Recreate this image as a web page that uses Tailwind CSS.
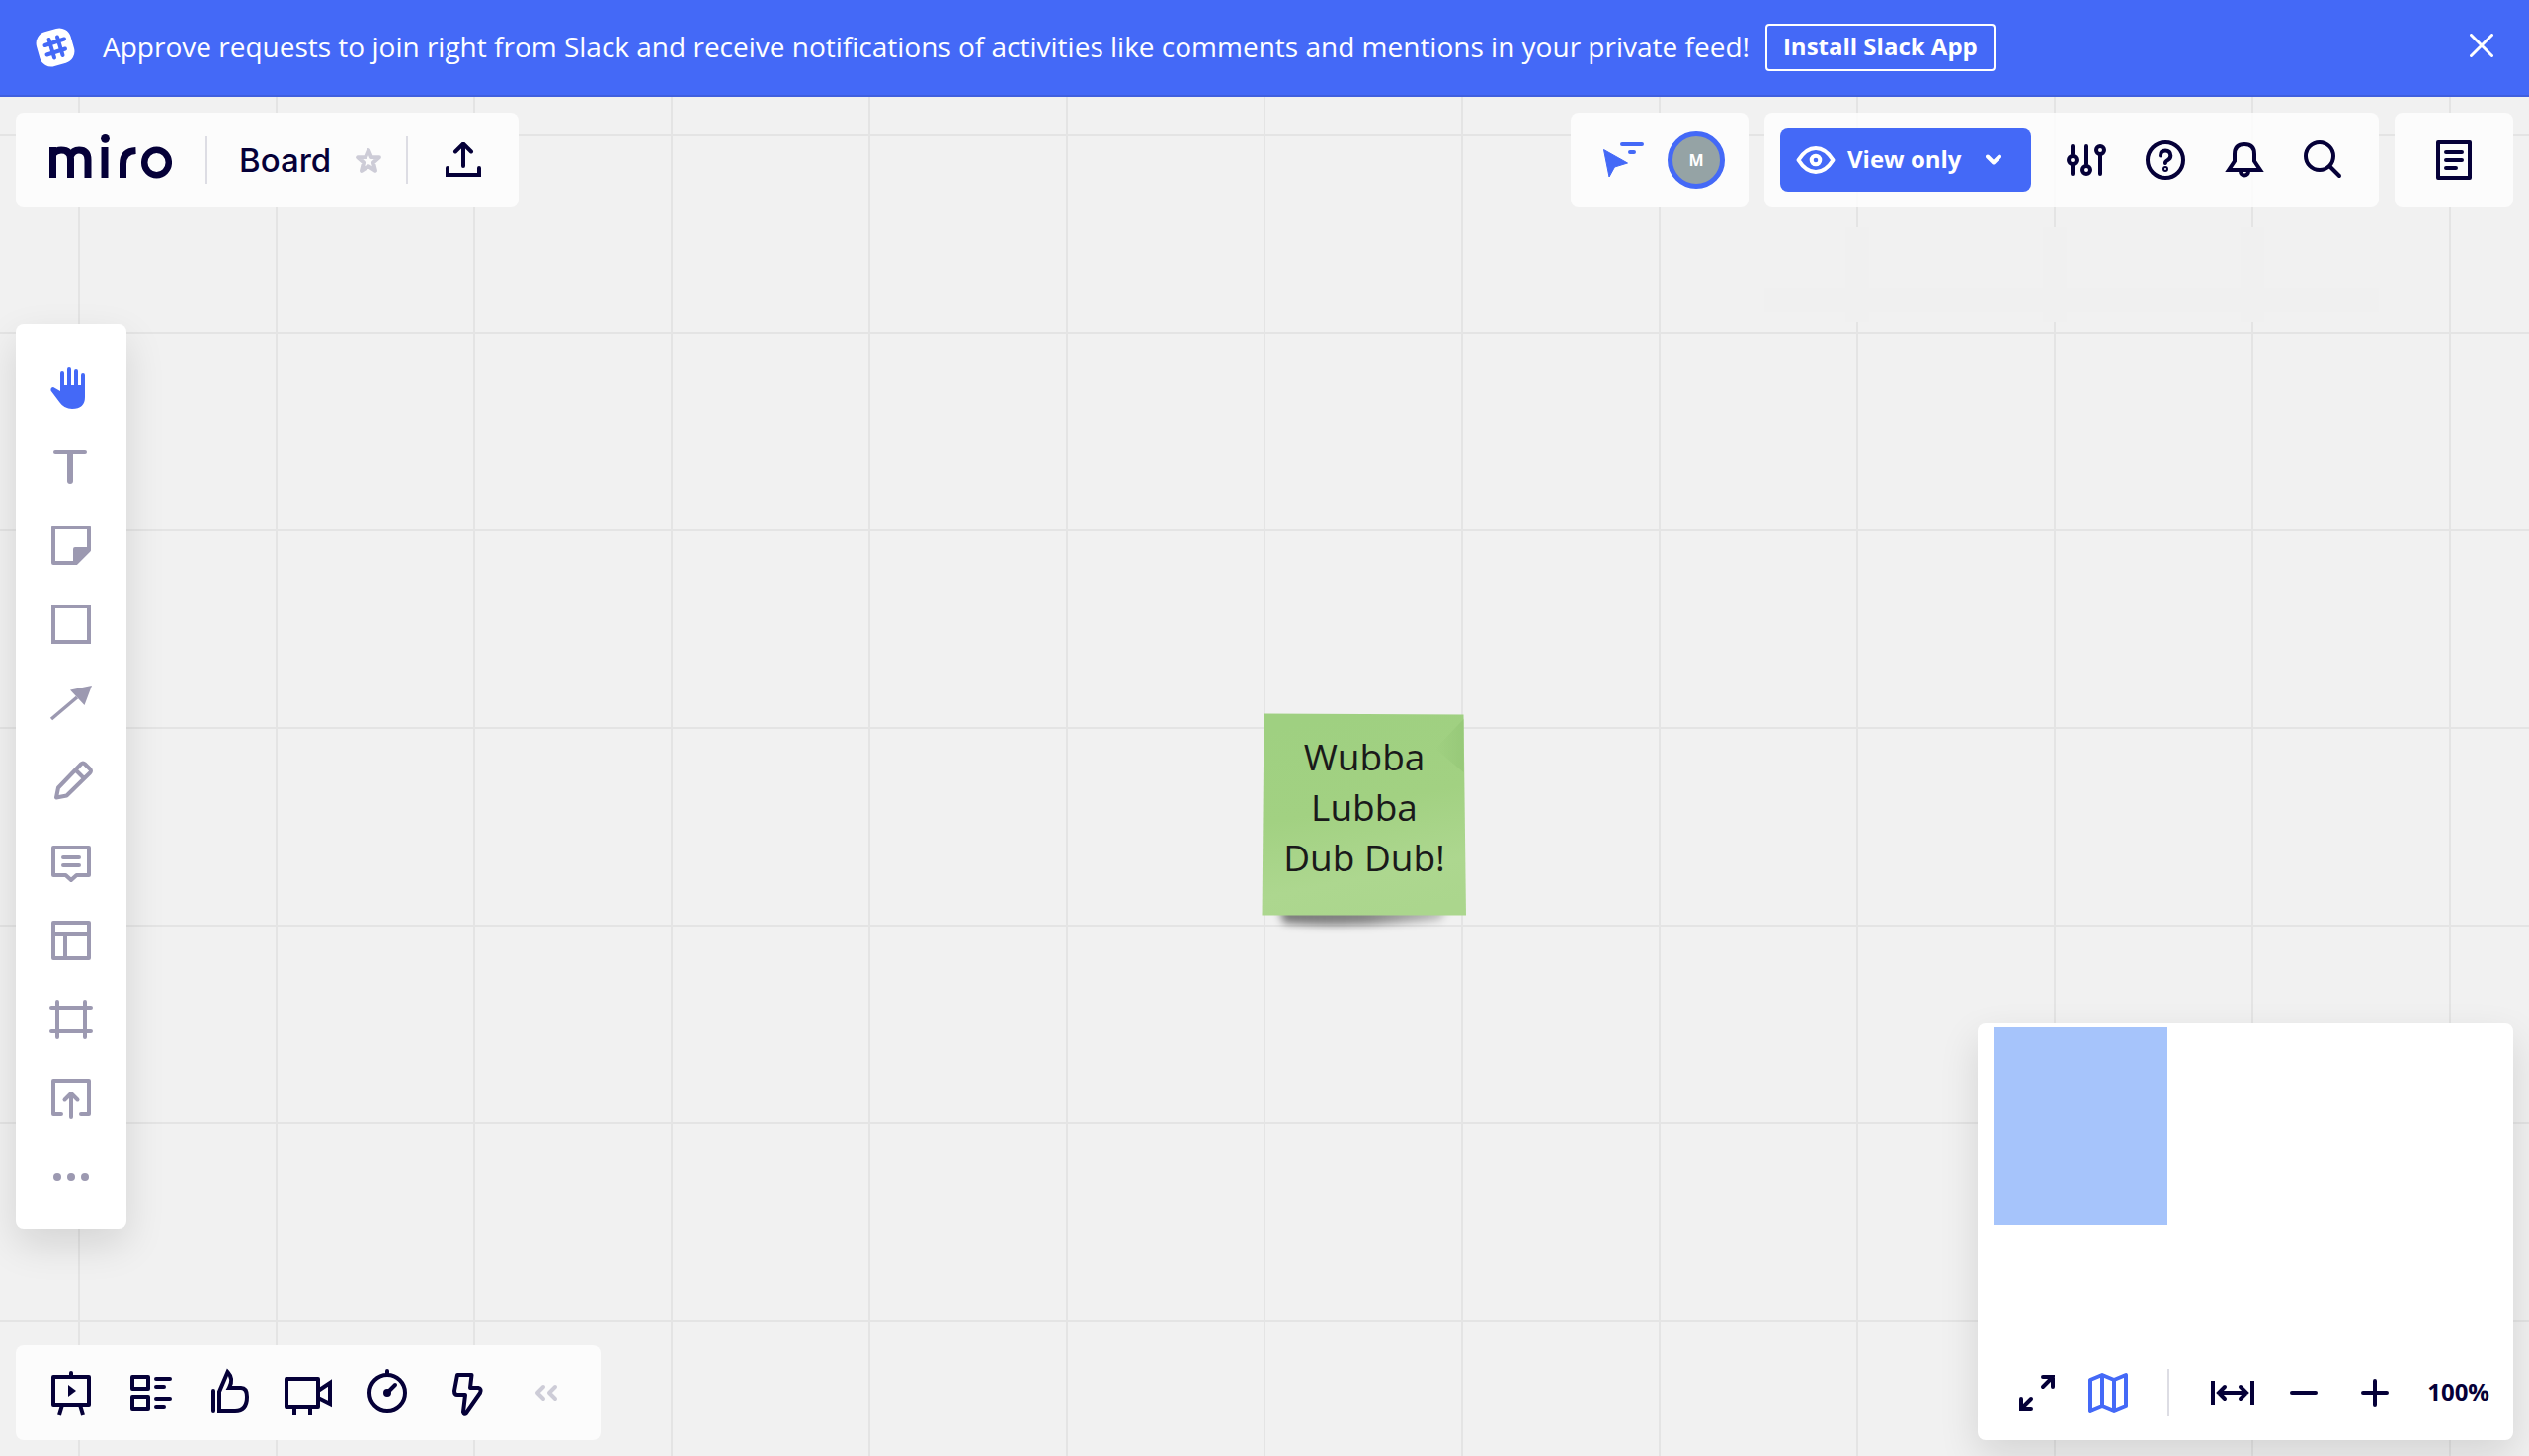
<!DOCTYPE html>
<html lang="en">
<head>
<meta charset="utf-8">
<title>Board</title>
<script src="https://cdn.jsdelivr.net/npm/@tailwindcss/browser@4"></script>
</head>
<body class="flex h-screen flex-col overflow-hidden bg-[#f1f1f1] font-['Open_Sans',sans-serif] text-[#050038]">

<header class="z-10 flex h-[98px] shrink-0 items-center border-b-2 border-[#405fde] bg-[#4469f7] pl-9 pr-8 text-white">
  <svg class="size-10 shrink-0" viewBox="0 0 40 40" fill="none" aria-hidden="true">
    <rect x="2" y="2" width="36" height="36" rx="12" fill="#fff" transform="rotate(-16 20 20)"/>
    <path d="M13.500 12l5.500 18.500M22 9.500L27.500 28M9.500 18L29 11.500M11.500 27.500L30 21.500" stroke="#4469f7" stroke-width="4" stroke-linecap="round"/>
  </svg>
  <p class="ml-7 pb-0.5 whitespace-nowrap text-[28px] leading-9">Approve requests to join right from Slack and receive notifications of activities like comments and mentions in your private feed!</p>
  <button class="ml-4 flex h-12 shrink-0 items-center rounded-sm border-2 border-white px-4 pb-0.5 text-[24px] leading-8 font-bold whitespace-nowrap">Install Slack App</button>
  <button class="ml-auto flex size-8 items-center justify-center pb-1" aria-label="Close">
    <svg class="size-6" viewBox="0 0 24 24" stroke="#fff" stroke-width="3" stroke-linecap="round"><path d="M1.500 1.500l21 21M22.500 1.500l-21 21"/></svg>
  </button>
</header>

<main class="relative flex grow flex-col overflow-hidden bg-[linear-gradient(to_right,#e4e4e4_2px,transparent_2px),linear-gradient(to_bottom,#e4e4e4_2px,transparent_2px)] bg-size-[200px_200px] bg-position-[79px_38px] p-4">

  <div class="absolute top-[132px] right-[152px] h-24 w-[622px] bg-[#f1f1f1] bg-[linear-gradient(to_right,transparent_82px,#f0f0f0_82px,#f0f0f0_106px,transparent_106px)] bg-size-[200px_100%] pt-[62px]">
    <div class="h-6 bg-[#f0f0f0]"></div>
  </div>

  <div class="flex h-24 items-stretch">
    <nav class="flex items-center rounded-lg bg-[#fcfcfc] pr-[38px] pl-[34px]">
      <a href="#" class="text-[#050038]" aria-label="miro">
        <svg class="h-14 w-[124px]" viewBox="0 -4 124 56" fill="none" stroke="#050038">
          <path d="M3.500 11V42M3.500 18Q7 14 12 14Q21.500 14 21.500 23V42M21.500 20Q24 14 30 14Q39 14 39 24V42M56 11V42M74.500 42V28Q74.500 15 87.500 14.500" stroke-width="7"/>
          <circle cx="56.500" cy="2.300" r="4.400" fill="#050038" stroke="none"/>
          <ellipse cx="108.500" cy="26.500" rx="12.300" ry="12.800" stroke-width="6.500"/>
        </svg>
      </a>
      <span class="ml-[34px] h-12 w-0.5 bg-[#dddde4]"></span>
      <h1 class="ml-8 font-['Inter',sans-serif] text-[33px] leading-10 font-medium">Board</h1>
      <button class="ml-6" aria-label="Favourite">
        <svg class="size-7" viewBox="0 0 28 28" fill="none" stroke="#cdccd7" stroke-width="4" stroke-linejoin="round"><path d="M14 4l2.900 7 8 .300-6 5.200 2.100 8.300L14 20.300l-7 4.500 2.100-8.300-6-5.200 8-.300z"/></svg>
      </button>
      <span class="ml-6 h-12 w-0.5 bg-[#dddde4]"></span>
      <button class="ml-[38px]" aria-label="Export">
        <svg class="size-9" viewBox="0 0 36 36" fill="none" stroke="#050038" stroke-width="4" stroke-linecap="round"><path d="M18 24V2.500M10 9.500L18 1.500l8 8M2 26v7h32v-7"/></svg>
      </button>
    </nav>

    <div class="ml-auto flex items-center rounded-lg bg-[#fcfcfc] pr-6 pl-8">
      <button aria-label="Show cursors">
        <svg class="h-10 w-[42px]" viewBox="0 0 42 40" fill="#4469f7"><path d="M1.500 9.500l24 13.500-13 4-5.500 10z" stroke="#4469f7" stroke-linejoin="round"/><path d="M20 4h20M28 12h4" stroke="#4469f7" stroke-width="4" stroke-linecap="round"/></svg>
      </button>
      <button class="ml-6 flex size-[58px] items-center justify-center rounded-full border-[5px] border-[#4469f7] bg-[#95a3a5] text-base leading-6 font-bold text-white">M</button>
    </div>

    <div class="ml-4 flex items-center rounded-lg bg-[#fcfcfc] bg-[linear-gradient(to_right,transparent_93px,#fafafa_93px,#fafafa_95px,transparent_95px)] bg-size-[200px_100%] px-4">
      <button class="flex h-16 w-[254px] items-center rounded-lg bg-[#4469f7] pl-4 text-[24px] leading-8 font-bold whitespace-nowrap text-white">
        <svg class="h-7 w-10" viewBox="0 0 40 28" fill="none" stroke="#fff" stroke-width="4"><path d="M2.500 14Q10 2 20 2t17.500 12Q30 26 20 26T2.500 14z" stroke-linejoin="round"/><circle cx="20" cy="14" r="4.300"/></svg>
        <span class="ml-3 pb-0.5">View only</span>
        <svg class="ml-6 h-3 w-4" viewBox="0 0 16 12" fill="none" stroke="#fff" stroke-width="4" stroke-linecap="round" stroke-linejoin="round"><path d="M2 2.500l6 6 6-6"/></svg>
      </button>
      <div class="ml-8 flex gap-8 pr-4">
        <button aria-label="Settings">
          <svg class="size-12" viewBox="0 0 48 48" fill="none" stroke="#050038" stroke-width="4" stroke-linecap="round"><path d="M10 10v8M10 28v10M24 10v18M38 18v20"/><circle cx="10" cy="24" r="4"/><circle cx="24" cy="34" r="4"/><circle cx="38" cy="14" r="4"/></svg>
        </button>
        <button aria-label="Help">
          <svg class="size-12" viewBox="0 0 48 48" fill="none" stroke="#050038" stroke-width="4" stroke-linecap="round"><circle cx="24" cy="24" r="18"/><path d="M19 19.500Q19 14.500 24 14.500T29.300 19.500Q29.300 22.500 26.500 24T24 27"/><circle cx="24" cy="33" r="1"/></svg>
        </button>
        <button aria-label="Notifications">
          <svg class="size-12" viewBox="0 0 48 48" fill="none" stroke="#050038" stroke-width="4"><path d="M8 34L14 25V18Q14 8 24 8T34 18V25L40 34z"/><path d="M20 35.500a4 4 0 0 0 8 0"/></svg>
        </button>
        <button aria-label="Search">
          <svg class="size-12" viewBox="0 0 48 48" fill="none" stroke="#050038" stroke-width="4" stroke-linecap="round"><circle cx="20" cy="20" r="14"/><path d="M30.500 30.500L40 40"/></svg>
        </button>
      </div>
    </div>

    <div class="ml-4 flex w-[120px] items-center justify-center rounded-lg bg-[#fcfcfc]">
      <button aria-label="Notes">
        <svg class="size-12" viewBox="0 0 48 48" fill="none" stroke="#050038" stroke-width="4" stroke-linecap="round" stroke-linejoin="round"><path d="M8 6h32v36H8zM16 16h16M16 24h16M16 32h10"/></svg>
      </button>
    </div>
  </div>

  <div class="mt-[118px] flex w-28 flex-col rounded-lg bg-white pt-6 pb-3 shadow-[0_16px_40px_rgba(0,0,0,0.12)]">
    <button class="flex h-20 items-center justify-center" aria-label="Hand">
      <svg class="size-12" viewBox="0 0 48 48" fill="#4469f7"><path d="M15 26V10M22 26V6M29 26V8M36 26V12" stroke="#4469f7" stroke-width="4" stroke-linecap="round"/><path d="M13 22h25v12q0 12-13 12-8 0-12.500-6.500L3.500 27.500Q3 24 6 24l7 4z"/></svg>
    </button>
    <button class="flex h-20 items-center justify-center" aria-label="Text">
      <svg class="size-12" viewBox="0 0 48 48" stroke="#9c99b1" stroke-linecap="round"><path d="M8 10h30" stroke-width="4"/><path d="M23 12v27" stroke-width="6"/></svg>
    </button>
    <button class="flex h-20 items-center justify-center" aria-label="Sticky note">
      <svg class="size-12" viewBox="0 0 48 48" fill="none" stroke="#9c99b1" stroke-width="4" stroke-linejoin="round"><path d="M6 6h36v23L29 42H6z"/><path d="M28 42V28h14z" fill="#9c99b1"/></svg>
    </button>
    <button class="flex h-20 items-center justify-center" aria-label="Shape">
      <svg class="size-12" viewBox="0 0 48 48" fill="none" stroke="#9c99b1" stroke-width="4"><path d="M6 6h36v36H6z"/></svg>
    </button>
    <button class="flex h-20 items-center justify-center" aria-label="Arrow">
      <svg class="size-12" viewBox="0 0 48 48" fill="#9c99b1"><path d="M4 40L30 18" stroke="#9c99b1" stroke-width="3.500"/><path d="M45 6L23 10.500 37.500 26z"/></svg>
    </button>
    <button class="flex h-20 items-center justify-center" aria-label="Pen">
      <svg class="size-12" viewBox="0 0 48 48" fill="none" stroke="#9c99b1" stroke-width="4" stroke-linejoin="round"><path d="M9 39.500l2-10L34 5.500q2-2 4 0l5 5q2 2 0 4L19.500 37.500zM28.500 11.500l9 9"/></svg>
    </button>
    <button class="flex h-20 items-center justify-center" aria-label="Comment">
      <svg class="size-12" viewBox="0 0 48 48" fill="none" stroke="#9c99b1" stroke-width="4" stroke-linecap="round"><path d="M6 10h36v28H29.500L24 43 18.500 38H6z" stroke-linejoin="round"/><path d="M16 20h16M16 28h16"/></svg>
    </button>
    <button class="flex h-20 items-center justify-center" aria-label="Templates">
      <svg class="size-12" viewBox="0 0 48 48" fill="none" stroke="#9c99b1" stroke-width="4" stroke-linejoin="round"><path d="M6 6h36v36H6zM6 18h36M18 18v24"/></svg>
    </button>
    <button class="flex h-20 items-center justify-center" aria-label="Frame">
      <svg class="size-12" viewBox="0 0 48 48" fill="none" stroke="#9c99b1" stroke-width="4" stroke-linecap="round"><path d="M10 6v36M38 6v36M4 12h40M4 36h40"/></svg>
    </button>
    <button class="flex h-20 items-center justify-center" aria-label="Upload">
      <svg class="size-12" viewBox="0 0 48 48" fill="none" stroke="#9c99b1" stroke-width="4" stroke-linecap="round" stroke-linejoin="round"><path d="M14 40H6V6h36v34h-8M24 43V19M17.500 25.500L24 19l6.500 6.500"/></svg>
    </button>
    <button class="flex h-20 items-center justify-center" aria-label="More">
      <svg class="size-12" viewBox="0 0 48 48" fill="#9c99b1"><circle cx="10" cy="24" r="4"/><circle cx="24" cy="24" r="4"/><circle cx="38" cy="24" r="4"/></svg>
    </button>
  </div>

  <article class="absolute top-[624px] left-[1277px] h-[210px] w-[208px]">
    <svg class="absolute inset-0 size-full overflow-visible" viewBox="0 0 208 210" aria-hidden="true">
      <defs>
        <linearGradient id="paper" x1="0.400" y1="0" x2="0.600" y2="1"><stop offset="0" stop-color="#9fd081"/><stop offset=".45" stop-color="#a2d182"/><stop offset=".8" stop-color="#add78f"/><stop offset="1" stop-color="#abd68d"/></linearGradient>
        <linearGradient id="shade" x1="0" x2="1"><stop offset="0" stop-opacity=".5"/><stop offset=".5" stop-opacity=".45"/><stop offset="1" stop-opacity=".2"/></linearGradient>
        <linearGradient id="curl" x1="0" x2="1"><stop offset="0" stop-color="#95c777" stop-opacity="0"/><stop offset="1" stop-color="#95c777" stop-opacity=".8"/></linearGradient>
        <filter id="soft" x="-20%" y="-100%" width="140%" height="400%"><feGaussianBlur stdDeviation="4"/></filter>
      </defs>
      <path d="M18 196H190L180 209Q80 218 22 212z" fill="url(#shade)" filter="url(#soft)"/>
      <path d="M2.500 .5L204.500 1.500L207 204.500H.5z" fill="url(#paper)"/>
      <path d="M176 36L204.500 6V60z" fill="url(#curl)"/>
    </svg>
    <p class="relative px-3 pt-[18px] text-center text-[37px] leading-[51px] text-[#1a1a1a]">Wubba Lubba Dub&nbsp;Dub!</p>
  </article>

  <div class="mt-auto flex items-end justify-between">
    <div class="flex h-24 items-center gap-8 rounded-lg bg-[#fcfcfc] px-8">
      <button aria-label="Present"><svg class="size-12" viewBox="0 0 48 48" fill="none" stroke="#050038" stroke-width="4" stroke-linejoin="round"><path d="M6 8h36v28H6z"/><path d="M24 4v4" stroke-linecap="round"/><path d="M15 36l-3 10M33 36l3 10"/><path d="M21 16v12l8-6z" fill="#050038" stroke="none"/></svg></button>
      <button aria-label="Cards"><svg class="size-12" viewBox="0 0 48 48" fill="none" stroke="#050038" stroke-width="4" stroke-linecap="round" stroke-linejoin="round"><path d="M6 8h16v12H6zM6 28h16v12H6zM30 10h14M30 18h8M30 30h14M30 38h8"/></svg></button>
      <button aria-label="Vote"><svg class="size-12 overflow-visible" viewBox="0 0 48 48" fill="none" stroke="#050038" stroke-width="4" stroke-linecap="round"><path d="M8 22v20M14 42V23L22.500 3Q29 10 24 19h12q6 0 6 9 0 14-12 14z"/></svg></button>
      <button aria-label="Video"><svg class="size-12 overflow-visible" viewBox="0 0 48 48" fill="none" stroke="#050038" stroke-width="4"><path d="M2 10h32v28H2z" stroke-linejoin="round"/><path d="M34 22l12-8v21l-12-6M10 38v8M26 38v8"/></svg></button>
      <button aria-label="Timer"><svg class="size-12" viewBox="0 0 48 48" fill="none" stroke="#050038" stroke-width="4" stroke-linecap="round"><circle cx="24" cy="24" r="18"/><path d="M24 2v4M32 16l-7 7"/><circle cx="24" cy="24" r="2"/></svg></button>
      <button aria-label="Apps"><svg class="size-12" viewBox="0 0 48 48" fill="none" stroke="#050038" stroke-width="4" stroke-linejoin="round"><path d="M15 6h14.500L28 19h8q4 1 2 5L24 44q-2 2-3-1l2-17h-8q-3 0-3-4z"/></svg></button>
      <button aria-label="Collapse"><svg class="size-12" viewBox="0 0 48 48" fill="none" stroke="#cdccd7" stroke-width="4" stroke-linecap="round" stroke-linejoin="round"><path d="M22 18l-6 6 6 6M34 18l-6 6 6 6"/></svg></button>
    </div>

    <section class="absolute right-4 bottom-4 flex h-[422px] w-[542px] flex-col justify-between rounded-lg bg-white shadow-[0_16px_40px_rgba(0,0,0,0.12)]">
      <div class="mt-1 ml-4 h-[200px] w-44 bg-[#a6c4fb]"></div>
      <div class="flex h-24 items-center pr-6 pl-9">
        <button aria-label="Full screen"><svg class="size-12" viewBox="0 0 48 48" fill="none" stroke="#050038" stroke-width="4" stroke-linecap="round"><path d="M30 8h10v10M40 8L30 18M8 30v10h10M8 40l10-10"/></svg></button>
        <button class="ml-6" aria-label="Map"><svg class="size-12" viewBox="0 0 48 48" fill="none" stroke="#4469f7" stroke-width="4" stroke-linejoin="round"><path d="M6 11l12-5 12 5 12-5v31l-12 5-12-5-12 5zM18 6v31M30 11v31"/></svg></button>
        <span class="ml-9 h-12 w-0.5 bg-[#dddde4]"></span>
        <button class="ml-10" aria-label="Fit to screen"><svg class="size-12" viewBox="0 0 48 48" fill="none" stroke="#050038" stroke-width="4"><path d="M4 12v24M44 12v24"/><path d="M10 24h28M16 18l-6 6 6 6M32 18l6 6-6 6" stroke-linecap="round"/></svg></button>
        <button class="ml-6" aria-label="Zoom out"><svg class="size-12" viewBox="0 0 48 48" stroke="#050038" stroke-width="4" stroke-linecap="round"><path d="M12 24h24"/></svg></button>
        <button class="ml-6" aria-label="Zoom in"><svg class="size-12" viewBox="0 0 48 48" stroke="#050038" stroke-width="4" stroke-linecap="round"><path d="M12 24h24M24 12v24"/></svg></button>
        <output class="ml-auto pb-0.5 text-[24px] leading-8 font-bold">100%</output>
      </div>
    </section>
  </div>
</main>
</body>
</html>
